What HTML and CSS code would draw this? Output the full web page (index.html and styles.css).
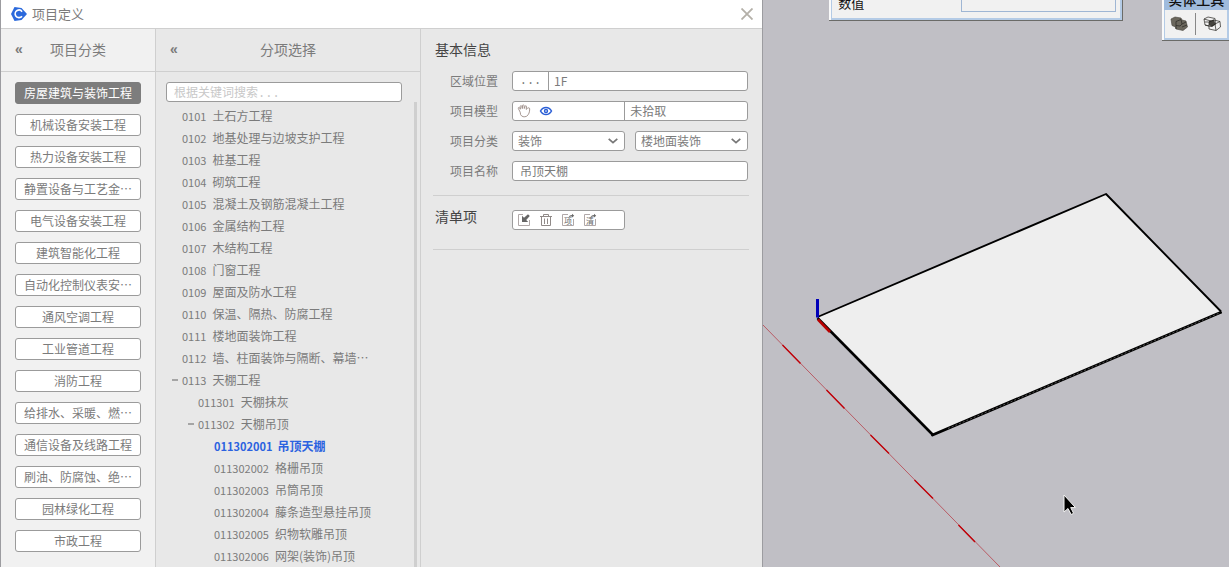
FILE: index.html
```html
<!DOCTYPE html>
<html lang="zh-CN">
<head>
<meta charset="utf-8">
<title>项目定义</title>
<link rel="stylesheet" href="styles.css">
</head>
<body>
<main class="workspace">
  <section class="dialog" aria-label="项目定义">
    <header class="titlebar">
      <svg class="logo" width="16" height="14" viewBox="0 0 16 14" aria-hidden="true">
        <path d="M3.500 0L10.500 1L16 7L10.500 13L3.500 14L0 7Z" fill="#2b69dc"/>
        <path d="M11 4.700C10 3.100 7.800 2.600 6.100 3.500C4.300 4.500 3.700 7 4.700 8.800C5.900 10.900 9.500 11.200 11 9.300" fill="none" stroke="#fff" stroke-width="1.700"/>
      </svg>
      <h1 class="titlebar-text">项目定义</h1>
      <button class="close" aria-label="关闭">
        <svg width="12" height="12" viewBox="0 0 12 12"><path d="M0.500 0.500L11.500 11.500M11.500 0.500L0.500 11.500" stroke="#b4b0a8" stroke-width="1.800"/></svg>
      </button>
    </header>
    <div class="panels">
      <nav class="panel categories">
        <div class="panel-head"><button class="collapse" aria-label="收起项目分类">«</button><h2>项目分类</h2></div>
        <div class="category-list">
          <button class="category active">房屋建筑与装饰工程</button>
          <button class="category">机械设备安装工程</button>
          <button class="category">热力设备安装工程</button>
          <button class="category">静置设备与工艺金…</button>
          <button class="category">电气设备安装工程</button>
          <button class="category">建筑智能化工程</button>
          <button class="category">自动化控制仪表安…</button>
          <button class="category">通风空调工程</button>
          <button class="category">工业管道工程</button>
          <button class="category">消防工程</button>
          <button class="category">给排水、采暖、燃…</button>
          <button class="category">通信设备及线路工程</button>
          <button class="category">刷油、防腐蚀、绝…</button>
          <button class="category">园林绿化工程</button>
          <button class="category">市政工程</button>
        </div>
      </nav>
      <section class="panel items">
        <div class="panel-head"><button class="collapse" aria-label="收起分项选择">«</button><h2>分项选择</h2></div>
        <div class="items-body">
          <div class="items-main">
            <input class="search" type="text" aria-label="搜索" placeholder="根据关键词搜索...">
            <ul class="tree">
              <li class="node"><span class="code">0101</span><span>土石方工程</span></li>
              <li class="node"><span class="code">0102</span><span>地基处理与边坡支护工程</span></li>
              <li class="node"><span class="code">0103</span><span>桩基工程</span></li>
              <li class="node"><span class="code">0104</span><span>砌筑工程</span></li>
              <li class="node"><span class="code">0105</span><span>混凝土及钢筋混凝土工程</span></li>
              <li class="node"><span class="code">0106</span><span>金属结构工程</span></li>
              <li class="node"><span class="code">0107</span><span>木结构工程</span></li>
              <li class="node"><span class="code">0108</span><span>门窗工程</span></li>
              <li class="node"><span class="code">0109</span><span>屋面及防水工程</span></li>
              <li class="node"><span class="code">0110</span><span>保温、隔热、防腐工程</span></li>
              <li class="node"><span class="code">0111</span><span>楼地面装饰工程</span></li>
              <li class="node"><span class="code">0112</span><span>墙、柱面装饰与隔断、幕墙…</span></li>
              <li class="node open"><span class="code">0113</span><span>天棚工程</span></li>
              <li class="node level-2"><span class="code">011301</span><span>天棚抹灰</span></li>
              <li class="node level-2 open"><span class="code">011302</span><span>天棚吊顶</span></li>
              <li class="node level-3 selected"><span class="code">011302001</span><span>吊顶天棚</span></li>
              <li class="node level-3"><span class="code">011302002</span><span>格栅吊顶</span></li>
              <li class="node level-3"><span class="code">011302003</span><span>吊筒吊顶</span></li>
              <li class="node level-3"><span class="code">011302004</span><span>藤条造型悬挂吊顶</span></li>
              <li class="node level-3"><span class="code">011302005</span><span>织物软雕吊顶</span></li>
              <li class="node level-3"><span class="code">011302006</span><span>网架(装饰)吊顶</span></li>
            </ul>
          </div>
          <div class="scrollbar"></div>
        </div>
      </section>
      <form class="panel details">
        <section class="group">
          <h2 class="group-title">基本信息</h2>
          <div class="field">
            <label for="zone">区域位置</label>
            <div class="box">
              <button type="button" class="more" aria-label="选择区域">...</button>
              <input id="zone" class="cell" type="text" value="1F">
            </div>
          </div>
          <div class="field">
            <label for="model">项目模型</label>
            <div class="box">
              <div class="tools">
                <button type="button" aria-label="拾取">
                  <svg width="14" height="14" viewBox="0 0 14 14" fill="none" stroke="#9a8a84" stroke-width="0.900"><path d="M3.200 8.200L1.300 4.400C1 3.500 2 3 2.600 3.800L3.400 5.200L3.200 2.500C3.200 1.500 4.500 1.300 4.800 2.300L5.300 4.600L5.500 1.500C5.700 0.600 7 0.700 7.100 1.600L7.300 4.500L8.100 2.200C8.500 1.400 9.700 1.700 9.500 2.700L9.200 5.400L10.600 4.200C11.400 3.500 12.800 3.700 12.700 5C12.600 8 12 10.500 9.700 12.200C7.300 13.500 4.500 12.700 3.600 10.600Z"/></svg>
                </button>
                <button type="button" aria-label="显示">
                  <svg width="14" height="14" viewBox="0 0 14 14"><path d="M1.500 7C4 2.300 10 2.300 12.500 7C10 11.700 4 11.700 1.500 7Z" fill="#fff" stroke="#2b5fd6" stroke-width="1.500"/><circle cx="7" cy="7" r="1.500" fill="#fff" stroke="#2b5fd6" stroke-width="1.400"/></svg>
                </button>
              </div>
              <input id="model" class="cell half" type="text" value="未拾取">
            </div>
          </div>
          <div class="field">
            <label for="kind">项目分类</label>
            <div class="pair">
              <div class="box choice">
                <select id="kind"><option>装饰</option></select>
                <svg class="chevron" width="10" height="6" viewBox="0 0 10 6"><path d="M0.700 0.800L5 4.700L9.300 0.800" fill="none" stroke="#777" stroke-width="1.700"/></svg>
              </div>
              <div class="box choice">
                <select aria-label="项目子分类"><option>楼地面装饰</option></select>
                <svg class="chevron" width="10" height="6" viewBox="0 0 10 6"><path d="M0.700 0.800L5 4.700L9.300 0.800" fill="none" stroke="#777" stroke-width="1.700"/></svg>
              </div>
            </div>
          </div>
          <div class="field">
            <label for="name">项目名称</label>
            <div class="box"><input id="name" class="cell name" type="text" value="吊顶天棚"></div>
          </div>
        </section>
        <section class="group list-group">
          <h2 class="group-title">清单项</h2>
          <div class="box tools list-tools">
            <button type="button" aria-label="导入">
              <svg width="14" height="14" viewBox="0 0 14 14"><path d="M6 1.500H1.500V12.500H12.500V7" fill="none" stroke="#b0a8a8"/><path d="M5 2.800V9H11.200L9.200 7L12.800 3L11 1.200L7 4.800Z" fill="#666"/></svg>
            </button>
            <button type="button" aria-label="删除">
              <svg width="14" height="14" viewBox="0 0 14 14" fill="none" stroke="#908a88"><path d="M1 3.500H13M4.500 3V1.500H9.500V3M2.500 4V12.500H11.500V4M5.500 5.500V11M8.500 5.500V11"/></svg>
            </button>
            <button type="button" aria-label="添加项目">
              <svg width="14" height="14" viewBox="0 0 14 14"><path d="M7 1.500H1.500V12.500H12.500V6" fill="none" stroke="#b0a8a8"/><path d="M7.500 4.500C8 2.800 9.500 2 11 2V0.800L13.200 2.700L11 4.600V3.400C9.500 3.300 8.500 3.600 7.500 4.500Z" fill="#666"/><text class="glyph" x="3" y="11">项</text></svg>
            </button>
            <button type="button" aria-label="添加清单">
              <svg width="14" height="14" viewBox="0 0 14 14"><path d="M7 1.500H1.500V12.500H12.500V6" fill="none" stroke="#b0a8a8"/><path d="M7.500 4.500C8 2.800 9.500 2 11 2V0.800L13.200 2.700L11 4.600V3.400C9.500 3.300 8.500 3.600 7.500 4.500Z" fill="#666"/><text class="glyph" x="3" y="11">清</text></svg>
            </button>
          </div>
        </section>
      </form>
    </div>
  </section>
  <section class="scene" aria-label="模型视图">
    <svg class="model" viewBox="0 0 466 567" preserveAspectRatio="xMinYMin slice">
      <path d="M0 325L237 567" stroke="#b8505a" stroke-width="0.900"/>
      <path d="M19.500 345L37.500 363.500M63.500 390L81.500 408.500M107.500 435L126 453.500M151.500 480L170 498.500M195.500 525L212 542" stroke="#c00008" stroke-width="1.400"/>
      <path d="M54.500 317.500L343 194L458 311.500L458 314L170 435Z" fill="#eee"/>
      <path d="M54.500 317L343 194L458 311.500" fill="none" stroke="#000" stroke-width="1.900" stroke-linejoin="round"/>
      <path d="M54.500 318L170 435" stroke="#000" stroke-width="2.600"/>
      <path d="M169.500 435L457.500 312.500" stroke="#000" stroke-width="2.900" stroke-linecap="round"/>
      <path d="M185 428.500L456 313.200" stroke="#777" stroke-width="0.700" stroke-dasharray="2 2"/>
      <path d="M55 319.500L67 332" stroke="#b80000" stroke-width="2.600"/>
      <path d="M54.500 299V317.500" stroke="#0000b8" stroke-width="3"/>
      <path d="M301 495V512L305 508.500L308.200 514.500L310.600 513.300L307.700 507.600H312.500Z" fill="#000" stroke="#f4f4f4" stroke-width="1"/>
    </svg>
    <div class="palette measure">
      <label for="value">数值</label>
      <input id="value" type="text">
    </div>
    <div class="palette solids">
      <div class="palette-title">实体工具</div>
      <div class="palette-tools">
        <button aria-label="实体外壳">
          <svg width="18" height="16" viewBox="0 0 18 16"><path d="M1 3L5 1L11 2L12 4L16 5L17.500 11L13 14.500L6 13L5.500 11L2 9.500Z" fill="#6b675d" stroke="#45423b" stroke-width="0.600"/><path d="M6 5.500L11 3.500L12 8M6 5.500V9.500L10 10L12 8L16 6M6 9.500V13M12 11L17 9" fill="none" stroke="#302f2a" stroke-width="0.800"/></svg>
        </button>
        <span class="separator"></span>
        <button aria-label="相交">
          <svg width="18" height="16" viewBox="0 0 18 16"><path d="M6 5L11 3.500L12.500 8.500L9 11L6 9Z" fill="#45433e"/><path d="M1 3L5 1L12 2.500L12.500 8L8 10.500L2 9ZM1 3L8 5M6 6L11 4L17 5.500L17.500 11L13 14.500L6 13ZM12 8L17 5.500M12 8L13 14.500M2 6H6M6 10L2 9" fill="none" stroke="#25241f" stroke-width="0.700"/></svg>
        </button>
      </div>
    </div>
  </section>
</main>
</body>
</html>
```

FILE: styles.css
```css
* {
  box-sizing: border-box;
}

body {
  margin: 0;
  font: 12px/20px "Noto Sans CJK SC", sans-serif;
  color: #7b7b7b;
}

h1, h2, ul {
  margin: 0;
  padding: 0;
  font-weight: 400;
  list-style: none;
}

button, input, select {
  margin: 0;
  padding: 0;
  border: 0;
  background: none;
  color: inherit;
  font: inherit;
}

svg {
  display: block;
}

.workspace {
  display: flex;
  height: 100vh;
  overflow: hidden;
}

/* Dialog */
.dialog {
  display: flex;
  flex-direction: column;
  width: 62.1%;
  border: solid #9c9ca0;
  border-width: 0 1px;
  background: #e8e8e8;
}

.titlebar {
  display: flex;
  align-items: center;
  gap: 5px;
  height: 29px;
  flex: none;
  padding: 0 9px 0 10px;
  border-bottom: 1px solid #cfcfcf;
  background: #fff;
}

.titlebar-text {
  flex: 1;
  font-size: 13px;
}

.panels {
  display: grid;
  grid-template-columns: 155px 265px 1fr;
  flex: 1;
  min-height: 0;
}

.panel {
  min-width: 0;
  overflow: hidden;
}

.categories {
  border-right: 1px solid #cfcfcf;
  background: #f1f1f1;
}

.items {
  display: flex;
  flex-direction: column;
  border-right: 1px solid #cfcfcf;
}

.panel-head {
  display: grid;
  grid-template-columns: 8px 1fr 8px;
  align-items: center;
  height: 43px;
  flex: none;
  padding: 0 14px 2px;
  border-bottom: 1px solid #cfcfcf;
}

.panel-head h2 {
  font-size: 14px;
  text-align: center;
}

.collapse {
  font: bold 14px/20px "Liberation Sans", sans-serif;
}

.category-list {
  display: flex;
  flex-direction: column;
  gap: 10px;
  padding: 10px 14px;
}

.category {
  height: 22px;
  flex: none;
  border: 1px solid #9b9b9b;
  border-radius: 3px;
  background: #fff;
  white-space: nowrap;
}

.category.active {
  border-color: #7d7d7d;
  background: #7d7d7d;
  color: #fff;
}

/* Item tree */
.items-body {
  display: flex;
  flex: 1;
  min-height: 0;
  padding: 10px 3px 0 10px;
}

.items-main {
  flex: 1;
  min-width: 0;
}

.search {
  display: block;
  width: 236px;
  height: 20px;
  padding: 0 7px;
  border: 1px solid #9b9b9b;
  border-radius: 3px;
  background: #fff;
}

.search::placeholder {
  color: #c8c8c8;
  font-family: "Liberation Mono", "Noto Sans CJK SC", monospace;
}

.scrollbar {
  width: 3px;
  margin-top: 20px;
  background: #cfcfcf;
}

.tree {
  padding-top: 3px;
}

.node {
  display: flex;
  gap: 6px;
  padding-left: 16px;
  line-height: 22px;
  white-space: nowrap;
}

.level-2 {
  padding-left: 32px;
}

.level-3 {
  padding-left: 48px;
}

.code {
  font-size: 11px;
}

.open::before {
  content: "";
  width: 6px;
  height: 2px;
  margin: 10px -2px 0 -10px;
  background: #a5a5a5;
}

.selected {
  gap: 5px;
  color: #2b62e0;
  font-weight: 700;
}

/* Details form */
.details {
  padding: 0 13px 0 12px;
}

.group {
  display: flex;
  flex-direction: column;
  gap: 10px;
  padding: 10px 0 14px;
  border-bottom: 1px solid #cfcfcf;
}

.group-title {
  padding: 0 0 2px 2px;
  color: #444;
  font-size: 14px;
  line-height: 20px;
}

.field {
  display: grid;
  grid-template-columns: 62px 1fr;
  padding: 0 1px 0 17px;
}

.box {
  display: flex;
  height: 20px;
  min-width: 0;
  border: 1px solid #9b9b9b;
  border-radius: 3px;
  background: #fff;
}

.cell {
  flex: 1;
  min-width: 0;
  padding-left: 5px;
}

.cell.name {
  padding-left: 7px;
}

.more {
  width: 36px;
  border-right: 1px solid #9b9b9b;
  font: 12px/16px "Liberation Mono", monospace;
}

.half {
  border-left: 1px solid #9b9b9b;
}

.tools {
  display: flex;
  flex: 1;
  align-items: center;
  gap: 8px;
  padding-left: 4px;
}

.field .tools {
  flex: 0 0 47.5%;
}

.pair {
  display: grid;
  grid-template-columns: 1fr 1fr;
  gap: 10px;
}

.choice {
  align-items: center;
  padding-right: 6px;
}

.choice select {
  flex: 1;
  min-width: 0;
  height: 18px;
  padding-left: 5px;
  appearance: none;
  line-height: 18px;
}

.chevron {
  flex: none;
  pointer-events: none;
}

.list-group {
  display: grid;
  grid-template-columns: 79px 113px;
  gap: 0;
  padding-bottom: 19px;
}

.list-tools {
  margin-top: 4px;
}

.glyph {
  fill: #666;
  font-size: 8px;
}

/* Model view */
.scene {
  position: relative;
  flex: 1;
  min-width: 0;
  overflow: hidden;
  background: #c0bfc5;
}

.model {
  width: 100%;
  height: 100%;
}

.palette {
  position: absolute;
  top: 0;
  border: solid #6b6b68;
  border-width: 0 1px 1px 0;
  background: #f1f1f1;
  box-shadow: inset 2px 0 #fafafa, inset 3px 0 #b4cbe6, inset -2px -2px #b4cbe6;
  color: #111;
}

.measure {
  left: 66px;
  display: flex;
  gap: 97px;
  width: 294px;
  height: 21px;
  padding: 0 6px 0 9px;
}

.measure label {
  flex: none;
  font-size: 13px;
  line-height: 6px;
}

.measure input {
  flex: 1;
  min-width: 0;
  height: 12px;
  border: 1px solid #9fb6d4;
  border-top: 0;
}

.solids {
  left: 399px;
  right: 0;
  height: 41px;
  border-right: 0;
}

.palette-title {
  display: flex;
  align-items: flex-end;
  height: 10px;
  margin-left: 2px;
  padding: 0 0 3px 4px;
  background: #9fbbdd;
  font-size: 14px;
  font-weight: 500;
  line-height: 16px;
  white-space: nowrap;
}

.palette-tools {
  display: flex;
  align-items: center;
  gap: 7px;
  height: 28px;
  padding-left: 8px;
}

.separator {
  width: 1px;
  height: 22px;
  background: #888;
}
```
